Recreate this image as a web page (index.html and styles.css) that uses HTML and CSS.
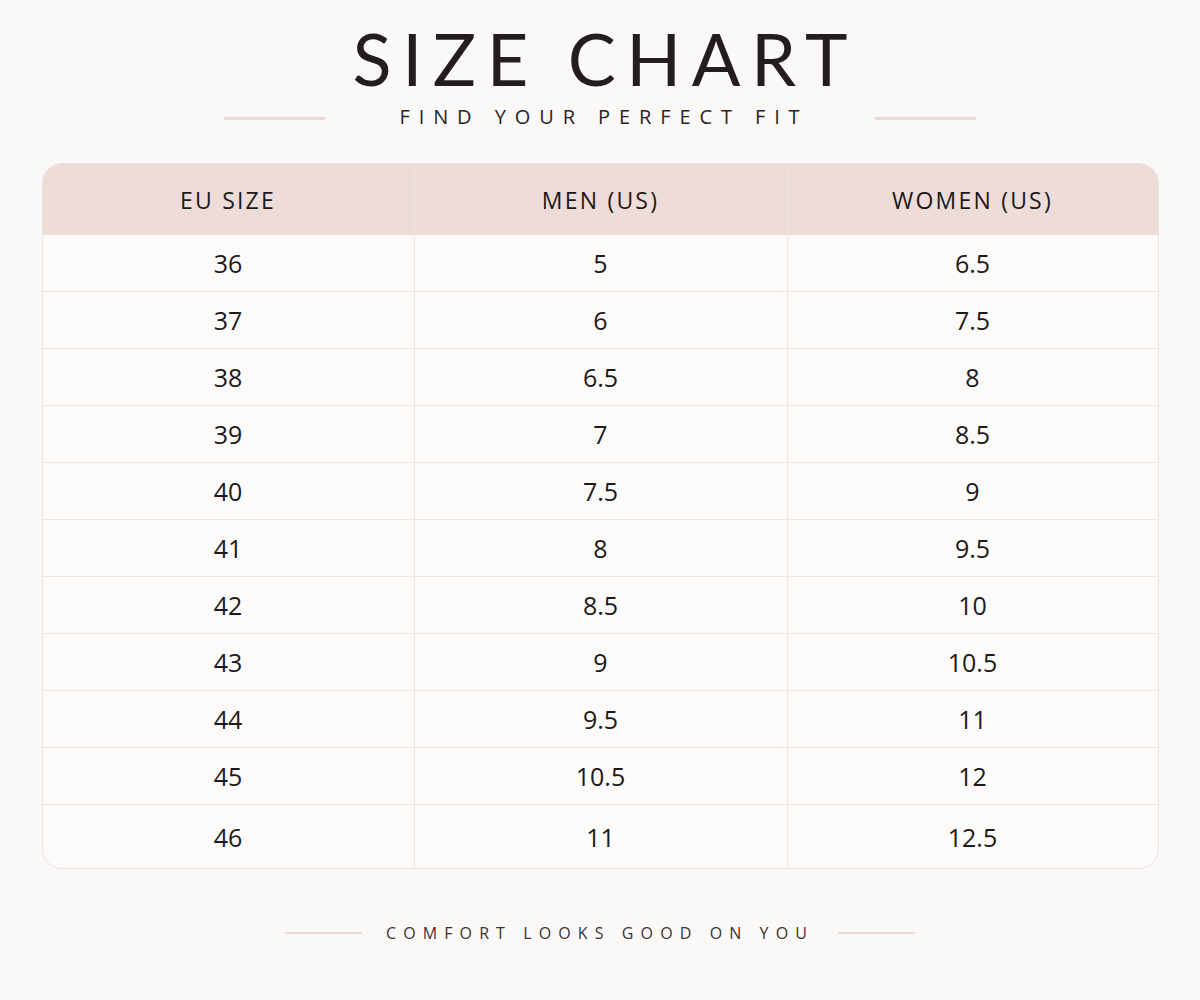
FILE: index.html
```html
<!DOCTYPE html>
<html>
<head>
<meta charset="utf-8">
<link rel="stylesheet" href="styles.css">
</head>
<body>
<div class="page">
  <header class="head">
    <h1 class="title">SIZE CHART</h1>
    <div class="sub-row">
      <span class="rule rule-top"></span>
      <span class="subtitle">FIND YOUR PERFECT FIT</span>
      <span class="rule rule-top"></span>
    </div>
  </header>
  <div class="table">
    <div class="row hrow">
      <div class="cell">EU SIZE</div>
      <div class="cell">MEN (US)</div>
      <div class="cell">WOMEN (US)</div>
    </div>
    <div class="row"><div class="cell">36</div><div class="cell">5</div><div class="cell">6.5</div></div>
    <div class="row"><div class="cell">37</div><div class="cell">6</div><div class="cell">7.5</div></div>
    <div class="row"><div class="cell">38</div><div class="cell">6.5</div><div class="cell">8</div></div>
    <div class="row"><div class="cell">39</div><div class="cell">7</div><div class="cell">8.5</div></div>
    <div class="row"><div class="cell">40</div><div class="cell">7.5</div><div class="cell">9</div></div>
    <div class="row"><div class="cell">41</div><div class="cell">8</div><div class="cell">9.5</div></div>
    <div class="row"><div class="cell">42</div><div class="cell">8.5</div><div class="cell">10</div></div>
    <div class="row"><div class="cell">43</div><div class="cell">9</div><div class="cell">10.5</div></div>
    <div class="row"><div class="cell">44</div><div class="cell">9.5</div><div class="cell">11</div></div>
    <div class="row"><div class="cell">45</div><div class="cell">10.5</div><div class="cell">12</div></div>
    <div class="row last"><div class="cell">46</div><div class="cell">11</div><div class="cell">12.5</div></div>
  </div>
  <footer class="foot">
    <span class="rule rule-foot"></span>
    <span class="tagline">COMFORT LOOKS GOOD ON YOU</span>
    <span class="rule rule-foot"></span>
  </footer>
</div>
</body>
</html>
```
FILE: styles.css
```css
html, body {
  margin: 0;
  padding: 0;
  background: #faf9f8;
}
body {
  font-family: "Open Sans", "Noto Sans", sans-serif;
  color: #221c1c;
}
.page {
  width: 1200px;
  height: 1000px;
  display: flex;
  flex-direction: column;
  align-items: center;
}
.head {
  display: flex;
  flex-direction: column;
  align-items: center;
  padding-top: 15px;
}
.title {
  margin: 0;
  font-family: "Lato", "Open Sans", sans-serif;
  font-weight: 400;
  font-size: 72px;
  line-height: 87px;
  letter-spacing: 10.5px;
  padding-left: 10.5px;
  color: #231d1e;
}
.sub-row {
  display: flex;
  align-items: center;
  gap: 66px;
  height: 30px;
}
.subtitle {
  font-size: 20px;
  letter-spacing: 8.9px;
  line-height: 28px;
  color: #2a2324;
  padding-left: 8px;
}
.rule {
  display: block;
  background: #ecd9d6;
}
.rule-top {
  width: 101px;
  height: 3px;
  margin-top: 2px;
}
.table {
  margin-top: 31px;
  width: 1115px;
  border: 1px solid #ede2e0;
  border-radius: 20px;
  overflow: hidden;
  background: #fcfbfa;
}
.row {
  display: grid;
  grid-template-columns: 372px 373px 1fr;
  height: 56px;
  border-bottom: 1px solid #efe6e4;
}
.row.last {
  height: 63px;
  border-bottom: none;
}
.hrow {
  height: 71px;
  background: #eedcd8;
  border-bottom: none;
}
.cell {
  display: flex;
  align-items: center;
  justify-content: center;
  font-size: 25px;
  color: #1d1819;
  border-right: 1px solid #efe6e4;
}
.cell:last-child {
  border-right: none;
}
.hrow .cell {
  font-size: 23px;
  letter-spacing: 2.2px;
  border-right-color: #f3e7e4;
  padding-top: 1px;
}
.foot {
  display: flex;
  align-items: center;
  gap: 24px;
  margin-top: 53px;
}
.rule-foot {
  width: 77px;
  height: 2px;
}
.tagline {
  font-size: 16px;
  letter-spacing: 7.1px;
  color: #3a3334;
}
```
